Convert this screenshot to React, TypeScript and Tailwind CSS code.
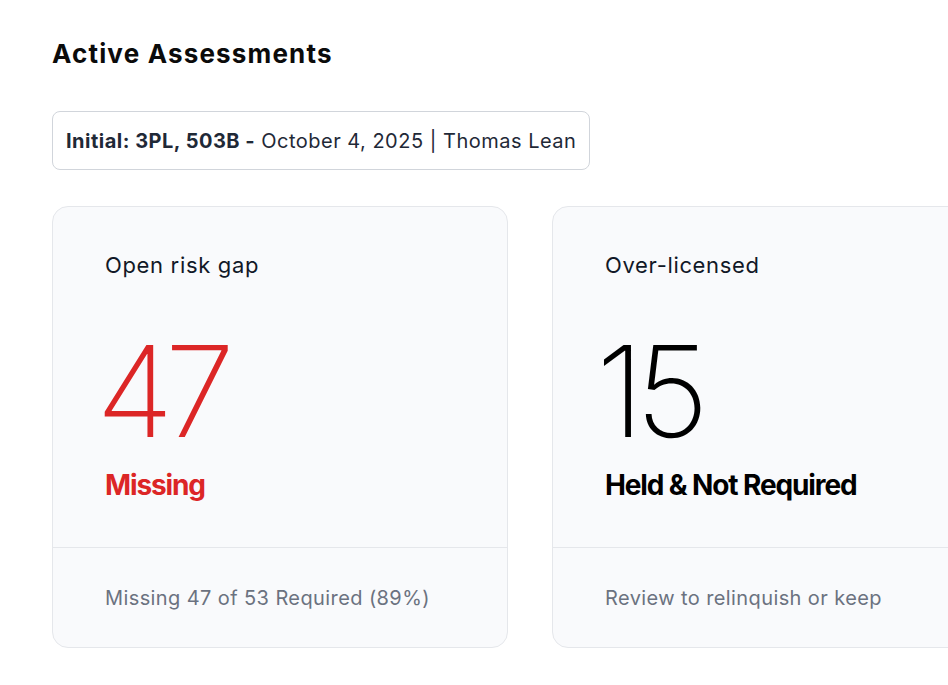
import React from 'react';

type Stat = {
  title: string;
  value: number;
  label: string;
  footer: string;
  tone: 'danger' | 'neutral';
};

const stats: Stat[] = [
  { title: 'Open risk gap', value: 47, label: 'Missing', footer: 'Missing 47 of 53 Required (89%)', tone: 'danger' },
  { title: 'Over-licensed', value: 15, label: 'Held & Not Required', footer: 'Review to relinquish or keep', tone: 'neutral' },
];

const StatCard: React.FC<{ stat: Stat }> = ({ stat }) => {
  const danger = stat.tone === 'danger';
  return (
    <div className="flex w-[456px] shrink-0 flex-col rounded-2xl border border-[#e5e7eb] bg-[#f9fafc]">
      <div className="px-[52px] pt-[44px] pb-[44px]">
        <p className="text-[22px] leading-[28px] tracking-[0.03em] text-[#111827]">{stat.title}</p>
        <p className={`mt-[49px] -ml-[9px] text-[127px] leading-none font-extralight tracking-[-0.07em] ${danger ? 'text-[#dc2626]' : 'text-black'}`}>
          {stat.value}
        </p>
        <p className={`mt-[12px] text-[28px] leading-[36px] font-bold tracking-[-0.04em] ${danger ? 'text-[#dc2626]' : 'text-black'}`}>
          {stat.label}
        </p>
      </div>
      <div className="flex h-[100px] items-center border-t border-[#e5e7eb] px-[52px]">
        <p className="text-[20px] leading-[28px] tracking-[0.02em] text-[#6b7280]">{stat.footer}</p>
      </div>
    </div>
  );
};

const App: React.FC = () => {
  return (
    <div className="h-[685px] w-[948px] overflow-hidden bg-white font-['Inter','Liberation_Sans',sans-serif]">
      <div className="pl-[52px] pt-[38px]">
        <h2 className="text-[26px] leading-8 font-bold tracking-[0.045em] text-[#0b0b0b]">Active Assessments</h2>

        <div className="mt-[41px] inline-flex h-[59px] items-center rounded-lg border border-[#d1d5db] bg-white px-[13px] text-[20px] tracking-[0.025em] text-[#1f2937]">
          <span className="font-bold">Initial: 3PL, 503B -</span>
          <span className="ml-[6px]">October 4, 2025 | Thomas Lean</span>
        </div>

        <div className="mt-[36px] flex gap-[44px]">
          {stats.map((s) => (
            <StatCard key={s.title} stat={s} />
          ))}
        </div>
      </div>
    </div>
  );
};

export default App;
